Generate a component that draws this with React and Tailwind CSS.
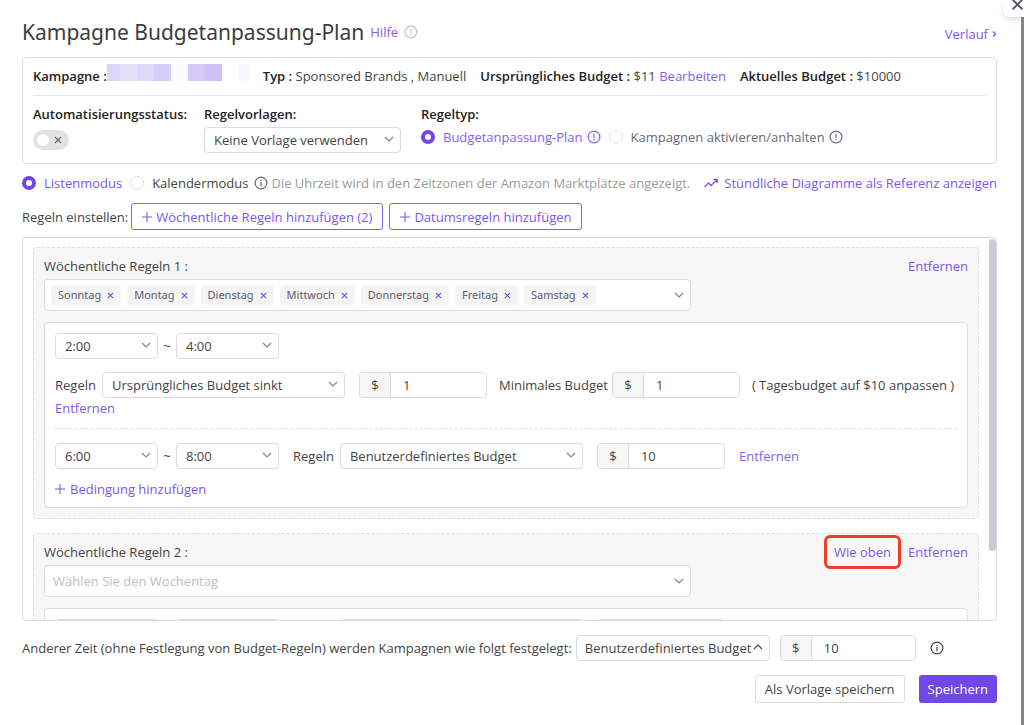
import { useState } from 'react'

const weekdays = ['Sonntag', 'Montag', 'Dienstag', 'Mittwoch', 'Donnerstag', 'Freitag', 'Samstag']

function Chevron({ up, className = '' }) {
  return (
    <svg viewBox="0 0 10 10" className={`w-[10px] h-[10px] pointer-events-none ${className}`} fill="none" stroke="currentColor" strokeWidth="1.2">
      {up ? <path d="M1 7l4-4 4 4" /> : <path d="M1 3l4 4 4-4" />}
    </svg>
  )
}

function Cross({ className = '' }) {
  return (
    <svg viewBox="0 0 8 8" className={className} fill="none" stroke="currentColor" strokeWidth="1.2">
      <path d="M1 1l6 6M7 1l-6 6" />
    </svg>
  )
}

function Plus() {
  return (
    <svg viewBox="0 0 10 10" className="w-[10px] h-[10px]" fill="none" stroke="currentColor" strokeWidth="1.1">
      <path d="M5 0v10M0 5h10" />
    </svg>
  )
}

// circle with "!" or, when info is set, with "i"
function Hint({ info, className = '' }) {
  return (
    <svg viewBox="0 0 14 14" className={`w-[14px] h-[14px] shrink-0 ${className}`} fill="none" stroke="currentColor" strokeWidth="1.2">
      <circle cx="7" cy="7" r="5.9" />
      <path d={info ? 'M7 6v4.2M7 3.7v1.2' : 'M7 3.8v4.2M7 9.1v1.2'} />
    </svg>
  )
}

function Select({ label, value, options = [], up, className = '' }) {
  return (
    <div className={`relative shrink-0 h-[26px] ${className}`}>
      <select
        aria-label={label}
        defaultValue={value}
        className={`appearance-none w-full h-full ${up ? 'pl-2 pr-4' : 'pl-[9px] pr-5'} bg-white border border-[#dcdbe2] rounded text-[#444]`}
      >
        <option>{value}</option>
        {options.map((o) => <option key={o}>{o}</option>)}
      </select>
      <Chevron up={up} className={`absolute top-[7px] right-[7px] ${up ? 'text-[#444]' : 'text-[#85838f]'}`} />
    </div>
  )
}

function Money({ label, value, className = 'w-32' }) {
  return (
    <label className={`flex shrink-0 h-[26px] border border-[#dcdbe2] rounded overflow-hidden bg-white ${className}`}>
      <span className="w-[31px] shrink-0 flex items-center justify-center bg-[#f6f6f6] border-r border-[#dcdbe2]">$</span>
      <input aria-label={label} defaultValue={value} className="w-full min-w-0 px-3 outline-none" />
    </label>
  )
}

function Radio({ name, checked, onChange, children, className = '' }) {
  return (
    <label className={`flex items-center gap-2 ${className}`}>
      <input
        type="radio"
        name={name}
        checked={checked}
        onChange={onChange}
        className="appearance-none w-[14px] h-[14px] rounded-full bg-white border border-[#e2e1e8] checked:border-4 checked:border-[#7048e8]"
      />
      {children}
    </label>
  )
}

function TimeRange({ from, to }) {
  return (
    <>
      <Select label="Von" value={from} className="w-[103px]" />
      <span className="w-[18px] text-center">~</span>
      <Select label="Bis" value={to} className="w-[103px]" />
    </>
  )
}

function RuleGroup({ title, actions, days, children }) {
  return (
    <section className="border border-dashed border-[#dedede] rounded bg-[#f7f7f7] px-[10px] pt-[6px] pb-[10px]">
      <div className="flex justify-between h-6 leading-6 mb-px">
        <h2>{title}</h2>
        <div className="flex gap-[17px] text-[#7b57ee]">{actions}</div>
      </div>
      <div className="w-[70%] h-8 flex items-center gap-[6px] px-[6px] bg-white border border-[#dcdbe2] rounded">
        {days.map((d) => (
          <span key={d} className="flex items-center gap-[6px] h-5 px-[7px] rounded-sm bg-[#f4f4f5] font-['Noto_Sans','Open_Sans',sans-serif] text-[11px] text-[#5f5c6b]">
            {d}
            <button aria-label={`${d} entfernen`} className="text-[#7048e8]"><Cross className="w-[7px] h-[7px]" /></button>
          </span>
        ))}
        {days.length === 0 && (
          <input placeholder="Wählen Sie den Wochentag" aria-label="Wochentag" className="flex-1 px-[2px] outline-none placeholder:text-[#bfbdc7]" />
        )}
        <button aria-label="Wochentage öffnen" className="ml-auto text-[#85838f]"><Chevron /></button>
      </div>
      <div className="mt-[11px] px-[10px] pt-[10px] pb-2 bg-white border border-[#dcdbe2] rounded">{children}</div>
    </section>
  )
}

export default function App() {
  const [type, setType] = useState('plan')
  const [mode, setMode] = useState('list')

  return (
    <div className="h-screen flex overflow-hidden bg-[#85868a] font-['Open_Sans','Noto_Sans',sans-serif] text-[13px] leading-5 text-[#444]">
      <main className="relative flex-1 min-w-0 flex flex-col bg-white pl-[22px] pr-6 pt-[15px] pb-[22px] mr-[3px]">
        <header className="flex items-center h-[34px] mb-2">
          <h1 className="font-['Noto_Sans','Open_Sans',sans-serif] text-[21px] leading-8 text-[#3c3c3c]">Kampagne Budgetanpassung-Plan</h1>
          <a href="#hilfe" className="ml-[6px] text-[#8461f5]">Hilfe</a>
          <Hint className="ml-[6px] text-[#c4c4c8]" />
          <a href="#verlauf" className="ml-auto flex items-center gap-1 pt-1 text-[#7b57ee]">
            Verlauf
            <svg viewBox="0 0 5 8" className="w-[5px] h-2" fill="none" stroke="currentColor" strokeWidth="1.3"><path d="M1 1.500l2.500 2.500-2.500 2.500" /></svg>
          </a>
        </header>

        <section className="border border-[#dcdce0] rounded px-[10px] h-[107px]">
          <div className="flex items-center h-[38px] pb-px border-b border-[#e6e6ee]">
            <b className="font-semibold text-[#222]">Kampagne :</b>
            <div className="flex h-[17px] mb-2 mr-[14px]">
              <i className="w-[13px] bg-[#dcd5f7]" />
              <i className="w-[17px] bg-[#e4dffb]" />
              <i className="w-[17px] bg-[#ded8f9]" />
              <i className="w-[17px] bg-[#d7cff7]" />
              <i className="w-[17px] bg-[#fbfaff]" />
              <i className="w-[17px] bg-[#d4caf6]" />
              <i className="w-[17px] bg-[#cdc1f6]" />
              <i className="w-[17px]" />
              <i className="w-[10px] bg-[#f6f4fe]" />
            </div>
            <p><b className="font-semibold text-[#222]">Typ :</b> Sponsored Brands , Manuell</p>
            <p className="ml-[14px]"><b className="font-semibold text-[#222]">Ursprüngliches Budget :</b> $11 <a href="#bearbeiten" className="text-[#8461f5]">Bearbeiten</a></p>
            <p className="ml-[14px]"><b className="font-semibold text-[#222]">Aktuelles Budget :</b> $10000</p>
          </div>
          <div className="flex pt-2">
            <div className="w-[171px]">
              <b className="block font-semibold text-[#222]">Automatisierungsstatus:</b>
              <button role="switch" aria-checked="false" aria-label="Automatisierungsstatus" className="mt-[6px] flex items-center justify-between w-9 h-5 rounded-full bg-[#e2e2e2] pl-1 pr-[7px] text-[#6b6878]">
                <span className="w-3 h-3 rounded-full bg-white" />
                <Cross className="w-2 h-2" />
              </button>
            </div>
            <div className="w-[217px]">
              <b className="block font-semibold text-[#222] mb-[3px]">Regelvorlagen:</b>
              <Select label="Regelvorlagen" value="Keine Vorlage verwenden" className="w-[197px]" />
            </div>
            <div>
              <b className="block font-semibold text-[#222] mb-[3px]">Regeltyp:</b>
              <div className="flex gap-2">
                <Radio name="type" checked={type === 'plan'} onChange={() => setType('plan')} className="text-[#8461f5]">
                  Budgetanpassung-Plan <Hint className="-ml-1" />
                </Radio>
                <Radio name="type" checked={type === 'toggle'} onChange={() => setType('toggle')} className="text-[#6b6878]">
                  Kampagnen aktivieren/anhalten <Hint className="-ml-1" />
                </Radio>
              </div>
            </div>
          </div>
        </section>

        <div className="flex items-center h-5 mt-[9px]">
          <Radio name="mode" checked={mode === 'list'} onChange={() => setMode('list')} className="text-[#7b57ee]">Listenmodus</Radio>
          <Radio name="mode" checked={mode === 'calendar'} onChange={() => setMode('calendar')} className="ml-2">Kalendermodus</Radio>
          <Hint info className="ml-[6px] mr-[3px] text-[#6b6878]" />
          <span className="text-[#9b9b9b]">Die Uhrzeit wird in den Zeitzonen der Amazon Marktplätze angezeigt.</span>
          <a href="#diagramme" className="ml-auto flex items-center gap-[6px] text-[#7b57ee]">
            <svg viewBox="0 0 14 10" className="w-[14px] h-[10px]" fill="none" stroke="currentColor" strokeWidth="1.3"><path d="M.5 9L4.500 5l2.500 2.500L13 1.800M9.500 1.500H13.200v3.500" /></svg>
            Stündliche Diagramme als Referenz anzeigen
          </a>
        </div>

        <div className="flex items-center mt-[10px] mb-[7px] text-[#7b57ee]">
          <span className="text-[#444] mr-[3px]">Regeln einstellen:</span>
          <button className="flex items-center gap-1 h-[27px] px-[10px] border border-[#8461f5] rounded-[3px]"><Plus />Wöchentliche Regeln hinzufügen (2)</button>
          <button className="ml-[6px] flex items-center gap-1 h-[27px] px-[10px] border border-[#8461f5] rounded-[3px]"><Plus />Datumsregeln hinzufügen</button>
        </div>

        <div className="flex-1 min-h-0 flex border border-[#dcdbe2] rounded overflow-hidden">
          <div className="flex-1 min-w-0 overflow-y-auto [scrollbar-width:none] px-[10px] pt-[9px]">
            <div className="flex flex-col gap-[14px]">
              <RuleGroup title="Wöchentliche Regeln 1 :" days={weekdays} actions={<button>Entfernen</button>}>
                <div className="flex items-center"><TimeRange from="2:00" to="4:00" /></div>
                <div className="flex items-center mt-[13px] whitespace-nowrap">
                  <span className="mr-[6px]">Regeln</span>
                  <Select label="Regel" value="Ursprüngliches Budget sinkt" className="w-[243px] mr-[14px]" />
                  <Money label="Betrag" value="1" />
                  <span className="ml-3 mr-1">Minimales Budget</span>
                  <Money label="Minimales Budget" value="1" />
                  <span className="ml-3">( Tagesbudget auf $10 anpassen )</span>
                </div>
                <button className="block text-[#7b57ee]">Entfernen</button>
                <div className="flex items-center mt-[10px] pt-[14px] border-t border-dashed border-[#dedede]">
                  <TimeRange from="6:00" to="8:00" />
                  <span className="ml-[14px] mr-[6px]">Regeln</span>
                  <Select label="Regel" value="Benutzerdefiniertes Budget" className="w-[243px] mr-[14px]" />
                  <Money label="Betrag" value="10" />
                  <button className="ml-[14px] text-[#8461f5]">Entfernen</button>
                </div>
                <button className="mt-[10px] flex items-center gap-[5px] text-[#7b57ee]"><Plus />Bedingung hinzufügen</button>
              </RuleGroup>
              <RuleGroup
                title="Wöchentliche Regeln 2 :"
                days={[]}
                actions={
                  <>
                    <button className="relative">
                      Wie oben
                      <span className="absolute -inset-x-[10px] -inset-y-[5px] border-3 border-[#ec3f26] rounded-md" />
                    </button>
                    <button>Entfernen</button>
                  </>
                }
              >
                <div className="flex items-center">
                  <TimeRange from="" to="" />
                  <span className="ml-[14px] mr-[6px]">Regeln</span>
                  <Select label="Regel" value="" className="w-[243px] mr-[14px]" />
                  <Money label="Betrag" value="" />
                </div>
              </RuleGroup>
            </div>
          </div>
          <div className="w-[7px] pt-px">
            <div className="h-[82%] rounded-full bg-[#cbc9d4]" />
          </div>
        </div>

        <div className="flex items-center mt-[14px]">
          <span>Anderer Zeit (ohne Festlegung von Budget-Regeln) werden Kampagnen wie folgt festgelegt:</span>
          <Select label="Andere Zeit" value="Benutzerdefiniertes Budget" up className="w-[194px] ml-1 mr-[10px]" />
          <Money label="Betrag" value="10" className="w-[136px]" />
          <Hint info className="ml-[14px]" />
        </div>
        <div className="flex justify-end gap-[14px] mt-[14px]">
          <button className="h-7 px-[9px] border border-[#dcdbe2] rounded-[3px]">Als Vorlage speichern</button>
          <button className="h-7 px-[9px] rounded-[3px] bg-[#7048e8] text-white">Speichern</button>
        </div>
      </main>
      <button aria-label="Schließen" className="absolute top-0 right-0 w-[21px] h-[17px] rounded-bl-md bg-white shadow-md text-[#5b5669] overflow-hidden">
        <Cross className="absolute left-2 -top-[2px] w-[13px] h-[13px]" />
      </button>
    </div>
  )
}
